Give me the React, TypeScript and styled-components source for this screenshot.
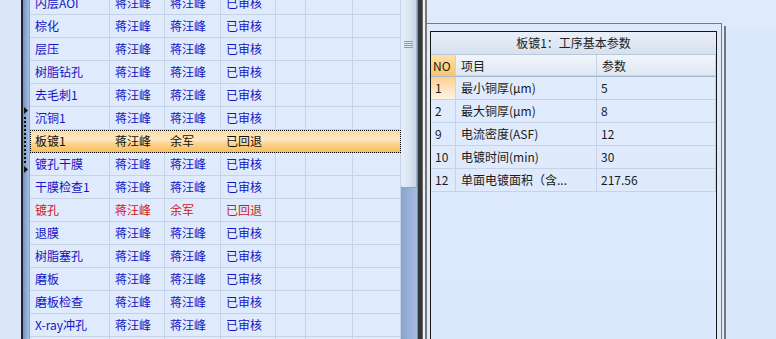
import React from "react";
import styled, { createGlobalStyle, css } from "styled-components";

const Global = createGlobalStyle`
  html, body { margin: 0; padding: 0; overflow: hidden; background: #dfeafb; }
  * { box-sizing: border-box; }
  body { font-family: "Noto Sans CJK SC", "DejaVu Sans", sans-serif; font-size: 12px; }
`;

type RowState = "normal" | "selected" | "rejected";
interface StepRow { name: string; a: string; b: string; s: string; state?: RowState }

const steps: StepRow[] = [
  { name: "内层AOI", a: "蒋汪峰", b: "蒋汪峰", s: "已审核" },
  { name: "棕化", a: "蒋汪峰", b: "蒋汪峰", s: "已审核" },
  { name: "层压", a: "蒋汪峰", b: "蒋汪峰", s: "已审核" },
  { name: "树脂钻孔", a: "蒋汪峰", b: "蒋汪峰", s: "已审核" },
  { name: "去毛刺1", a: "蒋汪峰", b: "蒋汪峰", s: "已审核" },
  { name: "沉铜1", a: "蒋汪峰", b: "蒋汪峰", s: "已审核" },
  { name: "板镀1", a: "蒋汪峰", b: "余军", s: "已回退", state: "selected" },
  { name: "镀孔干膜", a: "蒋汪峰", b: "蒋汪峰", s: "已审核" },
  { name: "干膜检查1", a: "蒋汪峰", b: "蒋汪峰", s: "已审核" },
  { name: "镀孔", a: "蒋汪峰", b: "余军", s: "已回退", state: "rejected" },
  { name: "退膜", a: "蒋汪峰", b: "蒋汪峰", s: "已审核" },
  { name: "树脂塞孔", a: "蒋汪峰", b: "蒋汪峰", s: "已审核" },
  { name: "磨板", a: "蒋汪峰", b: "蒋汪峰", s: "已审核" },
  { name: "磨板检查", a: "蒋汪峰", b: "蒋汪峰", s: "已审核" },
  { name: "X-ray冲孔", a: "蒋汪峰", b: "蒋汪峰", s: "已审核" },
  { name: "", a: "", b: "", s: "" },
];

const params = [
  { no: "1", item: "最小铜厚(μm)", val: "5", current: true },
  { no: "2", item: "最大铜厚(μm)", val: "8" },
  { no: "9", item: "电流密度(ASF)", val: "12" },
  { no: "10", item: "电镀时间(min)", val: "30" },
  { no: "12", item: "单面电镀面积（含...", val: "217.56" },
];

const Page = styled.div`
  display: flex;
  width: 776px;
  height: 339px;
  overflow: hidden;
  background: #dfeafb;
`;

const LeftStrip = styled.div`
  width: 21px;
  flex: none;
  background: #dbe7f9;
`;

const SplitBar = styled.div`
  width: 8px;
  flex: none;
  border-left: 2px solid #262626;
  background: linear-gradient(to right, #6f91c4, #a9c0e3);
  display: flex;
  flex-direction: column;
  align-items: flex-start;
  padding-top: 107px;
  gap: 3px;
`;

const Arrow = styled.svg`
  display: block;
  margin-left: 1px;
`;

const GripDots = styled.div`
  width: 2px;
  height: 46px;
  margin-left: 1px;
  background: repeating-linear-gradient(to bottom, #111 0 2px, transparent 2px 4px);
`;

const Grid = styled.div`
  width: 372px;
  flex: none;
  border-left: 1px solid #86a2cc;
  background: #dfeafc;
  overflow: hidden;
`;

const Rows = styled.div`
  margin-top: -8px;
`;

const rowColors: Record<RowState, string> = {
  normal: "#1414c4",
  selected: "#111111",
  rejected: "#d01a1a",
};

const GridRow = styled.div<{ $state: RowState }>`
  display: grid;
  grid-template-columns: 80px 55px 56px 55px 30px 47px 48px;
  height: 23px;
  color: ${(p) => rowColors[p.$state]};
  ${(p) =>
    p.$state === "selected" &&
    css`
      background: linear-gradient(to bottom, #fcdca2 0%, #fde8c6 42%, #fcd591 58%, #f9bb55 100%);
      outline: 1px dotted #000;
      outline-offset: -1px;
    `}
`;

const Cell = styled.div<{ $plain?: boolean }>`
  height: 23px;
  line-height: 22px;
  padding-left: 5px;
  white-space: nowrap;
  overflow: hidden;
  border-right: 1px solid ${(p) => (p.$plain ? "transparent" : "#c6d3e7")};
  border-bottom: 1px solid ${(p) => (p.$plain ? "transparent" : "#c6d3e7")};
`;

const ScrollBar = styled.div`
  width: 16px;
  flex: none;
  display: flex;
  flex-direction: column;
  background: linear-gradient(to right, #88a3cc, #a7bee1);
`;

const Thumb = styled.div`
  height: 188px;
  background: linear-gradient(to right, #e8eef8 0%, #dae4f2 60%, #c8d6ea 100%);
  border-right: 1px solid #9cb1d1;
  border-bottom: 1px solid #8aa2c8;
  border-radius: 0 0 2px 2px;
  padding-top: 41px;
  display: flex;
  justify-content: center;
`;

const ThumbGrip = styled.div`
  width: 9px;
  height: 7px;
  background: repeating-linear-gradient(to bottom, #8d9bb0 0 1px, transparent 1px 2px);
`;

const Divider = styled.div`
  width: 10px;
  flex: none;
  background: linear-gradient(
    to right,
    #8a8a8a 0 1px,
    #363636 1px 5px,
    #6a6a6a 5px 6px,
    #eef2f8 6px 8px,
    #777 8px 10px
  );
`;

const RightArea = styled.div`
  flex: 1;
  display: flex;
  flex-direction: column;
  background: #dfeafb;
`;

const TopBar = styled.div`
  height: 23px;
  flex: none;
`;

const PanelRow = styled.div`
  flex: 1;
  display: flex;
  gap: 2px;
`;

const MiddlePanel = styled.div`
  width: 295px;
  flex: none;
  border-top: 1px solid #7a7a7a;
  border-right: 1px solid #7a7a7a;
  padding: 7px 4px 0 3px;
`;

const ParamBox = styled.div`
  height: 100%;
  border: 1px solid #161616;
  border-bottom: none;
  background: linear-gradient(to bottom, #e1ecfc, #dbe8fd);
  color: #1a1a1a;
`;

const BoxTitle = styled.div`
  height: 23px;
  line-height: 22px;
  text-align: center;
  background: linear-gradient(to bottom, #e9eff8, #d7e1ef);
  border-bottom: 1px solid #b9c7db;
  color: #222;
`;

const ParamRow = styled.div<{ $head?: boolean }>`
  display: grid;
  grid-template-columns: 25px 141px 119px;
  height: ${(p) => (p.$head ? 22 : 23)}px;
  ${(p) =>
    p.$head &&
    css`
      background: linear-gradient(to bottom, #f2f6fb, #dde6f2);
      border-bottom: 1px solid #a9bbd4;
    `}
`;

const PCell = styled.div<{ $hl?: "head" | "row"; $pad?: number }>`
  line-height: 22px;
  padding-left: ${(p) => p.$pad ?? 4}px;
  white-space: nowrap;
  overflow: hidden;
  border-right: 1px solid #c6d3e7;
  border-bottom: 1px solid #c6d3e7;
  ${(p) =>
    p.$hl === "head" &&
    css`
      background: linear-gradient(to bottom, #fde2a8, #f7c36c);
      border-bottom: none;
    `}
  ${(p) =>
    p.$hl === "row" &&
    css`
      background: linear-gradient(to bottom, #fbd08c, #fde9cb 70%, #fdf2e2);
    `}
`;

const RightPanel = styled.div`
  flex: 1;
  margin-top: 3px;
  border-left: 2px solid #777;
  background: linear-gradient(to bottom, #dce9fd, #d9e7fd);
`;

const TriangleIcon = () => (
  <Arrow width="4" height="7" viewBox="0 0 4 7">
    <polygon points="0,0 4,3.5 0,7" fill="#111" />
  </Arrow>
);

export default function App() {
  return (
    <>
      <Global />
      <Page>
        <LeftStrip />
        <SplitBar>
          <TriangleIcon />
          <GripDots />
          <TriangleIcon />
        </SplitBar>
        <Grid>
          <Rows>
            {steps.map((r, i) => {
              const st: RowState = r.state ?? "normal";
              const plain = st === "selected";
              return (
                <GridRow key={i} $state={st}>
                  <Cell $plain={plain}>{r.name}</Cell>
                  <Cell $plain={plain}>{r.a}</Cell>
                  <Cell $plain={plain}>{r.b}</Cell>
                  <Cell $plain={plain}>{r.s}</Cell>
                  <Cell $plain={plain} />
                  <Cell $plain={plain} />
                  <Cell $plain={plain} />
                </GridRow>
              );
            })}
          </Rows>
        </Grid>
        <ScrollBar>
          <Thumb>
            <ThumbGrip />
          </Thumb>
        </ScrollBar>
        <Divider />
        <RightArea>
          <TopBar />
          <PanelRow>
            <MiddlePanel>
              <ParamBox>
                <BoxTitle>板镀1：工序基本参数</BoxTitle>
                <ParamRow $head>
                  <PCell $hl="head" $pad={2}>NO</PCell>
                  <PCell $pad={5}>项目</PCell>
                  <PCell $pad={5}>参数</PCell>
                </ParamRow>
                {params.map((p) => (
                  <ParamRow key={p.no}>
                    <PCell $hl={p.current ? "row" : undefined}>{p.no}</PCell>
                    <PCell $pad={5}>{p.item}</PCell>
                    <PCell>{p.val}</PCell>
                  </ParamRow>
                ))}
              </ParamBox>
            </MiddlePanel>
            <RightPanel />
          </PanelRow>
        </RightArea>
      </Page>
    </>
  );
}
